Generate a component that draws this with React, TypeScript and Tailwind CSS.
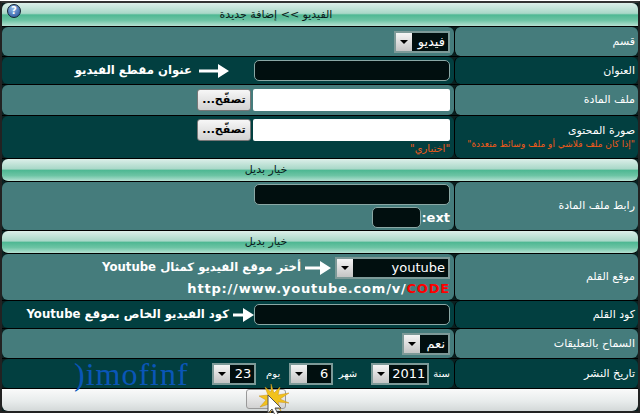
const band = "bg-[linear-gradient(#dcefe9_0%,#a9d8c8_45%,#4fb893_52%,#6cc4a4_75%,#b5e0d2_100%)]";
const rowLight = "bg-[#457c7c]";
const rowDark = "bg-[#023f40]";

const Band = ({ text, h, shift, rounded }: { text: string; h: string; shift: string; rounded?: boolean }) => (
  <div className={`${band} ${h} ${rounded ? "rounded-t-md" : "rounded-md"} border-b border-black flex items-center justify-center text-[11px] text-[#0a1a1a]`}>
    <span dir="rtl" className={`${shift} whitespace-pre`}>{text}</span>
  </div>
);

const Row = ({ label, dark, h, extra, children }: { label: string; dark?: boolean; h: string; extra?: string; children?: React.ReactNode }) => (
  <div className={`flex ${h} border-b border-black`}>
    <div className={`w-[452px] shrink-0 rounded-md ${dark ? rowDark : rowLight} flex flex-col justify-center items-end pr-[4px] pl-2 gap-[2px]`}>
      {children}
    </div>
    <div className={`flex-1 min-w-0 border-l border-black rounded-md ${dark ? rowDark : rowLight} flex flex-col justify-center items-end pr-[3px]`}>
      <span dir="rtl" className="text-[11px] text-white leading-[14px]">{label}</span>
      {extra && <span dir="rtl" className="text-[9px] text-[#f05a1a] leading-[13px] whitespace-nowrap">{extra}</span>}
    </div>
  </div>
);

const Arrow = ({ w }: { w: number }) => (
  <svg width={w} height="14" viewBox={`0 0 ${w} 14`} className="shrink-0">
    <path d={`M0 5.5h${w - 11}V0L${w} 7l-11 7V8.5H0z`} fill="#fff" />
  </svg>
);

const Dark = ({ w }: { w: string }) => (
  <input className={`${w} h-[21px] bg-[#010f0f] border border-[#8aa8a5] rounded-[5px] outline-none`} />
);

const Select = ({ value, w, dirRtl }: { value: string; w: string; dirRtl?: boolean }) => (
  <div className={`${w} h-[22px] border-2 border-[#7d9a98] bg-[#010f0f] flex items-stretch shrink-0`}>
    <div className="w-[16px] bg-[linear-gradient(#f5f5f5,#c4c4c4)] flex items-center justify-center shrink-0">
      <svg width="8" height="4" viewBox="0 0 8 4"><path d="M0 0h8L4 4z" fill="#000" /></svg>
    </div>
    <div dir={dirRtl ? "rtl" : "ltr"} className={`flex-1 flex items-center px-[3px] text-[13px] text-white ${dirRtl ? "justify-start" : "justify-end"}`}>{value}</div>
  </div>
);

const Browse = () => (
  <div className="flex items-center gap-[2px]">
    <div className="w-[54px] h-[22px] rounded-[3px] border border-[#777] bg-[linear-gradient(#f7f7f7,#d2d2d2)] flex items-center justify-center text-[11px] font-bold text-black">
      <span dir="rtl">تصفّح...</span>
    </div>
    <input className="w-[197px] h-[22px] bg-white rounded-[2px] outline-none" />
  </div>
);

export default function App() {
  return (
    <div className="w-[642px] h-[414px] bg-white overflow-hidden" style={{ fontFamily: '"DejaVu Sans", sans-serif' }}>
      <div className="w-[640px] h-[412px] border-2 border-[#222] border-t-[#333] relative bg-[#0a2020] mt-[1px]">
        <div className="absolute z-10 left-[5px] top-[1px] w-[14px] h-[14px] rounded-full bg-[radial-gradient(circle_at_40%_30%,#8fb8e8,#1d4a94)] border border-[#123] flex items-center justify-center text-[10px] font-bold text-white leading-none">?</div>
        <Band text="الفيديو >> إضافة جديدة" h="h-[24px]" shift="mr-[88px] mt-[2px]" rounded />
        <Row label="قسم" h="h-[30px]">
          <Select value="فيديو" w="w-[56px]" dirRtl />
        </Row>
        <Row label="العنوان" dark h="h-[28px]">
          <div className="flex items-center">
            <span dir="rtl" className="text-[11.7px] font-bold text-white">عنوان مقطع الفيديو</span>
            <div className="w-[7px]" />
            <Arrow w={30} />
            <div className="w-[25px]" />
            <Dark w="w-[196px]" />
          </div>
        </Row>
        <Row label="ملف المادة" h="h-[31px]">
          <Browse />
        </Row>
        <Row label="صورة المحتوى" dark h="h-[43px]" extra={'"إذا كان ملف فلاشي أو ملف وسائط متعددة"'}>
          <Browse />
          <span dir="rtl" className="text-[10px] text-[#f05a1a] leading-[12px] whitespace-nowrap">"اختياري"</span>
        </Row>
        <Band text="خيار بديل" h="h-[23px]" shift="mr-[108px]" />
        <Row label="رابط ملف المادة" h="h-[49px]">
          <Dark w="w-[196px]" />
          <div className="flex items-center">
            <Dark w="w-[49px]" />
            <span className="text-[13px] font-bold text-white leading-none">:ext</span>
          </div>
        </Row>
        <Band text="خيار بديل" h="h-[23px]" shift="mr-[108px]" />
        <Row label="موقع القلم" h="h-[47px]">
          <div className="flex items-center">
            <span dir="rtl" className="text-[11.7px] font-bold text-white">أختر موقع الفيديو كمثال Youtube</span>
            <div className="w-[4px]" />
            <Arrow w={26} />
            <div className="w-[4px]" />
            <Select value="youtube" w="w-[115px]" />
          </div>
          <div className="text-[13px] font-bold text-white tracking-[0.8px] leading-[16px]">
            http://www.youtube.com/v/<span className="text-[#ff0000]">CODE</span>
          </div>
        </Row>
        <Row label="كود القلم" dark h="h-[28px]">
          <div className="flex items-center">
            <span dir="rtl" className="text-[11.7px] font-bold text-white">كود الفيديو الخاص بموقع Youtube</span>
            <div className="w-[4px]" />
            <Arrow w={21} />
            <Dark w="w-[196px]" />
          </div>
        </Row>
        <Row label="السماح بالتعليقات" h="h-[30px]">
          <Select value="نعم" w="w-[48px]" dirRtl />
        </Row>
        <Row label="تاريخ النشر" dark h="h-[30px]">
          <div className="flex items-center h-full w-full">
            <div className="ml-[64px] text-[#0a56b8] text-[32px] leading-none tracking-[1px] h-full flex items-center" style={{ fontFamily: '"Liberation Serif", serif' }}>
              <span>)imofinf</span>
            </div>
            <div className="flex-1" />
            <div className="flex items-center gap-[4px]">
              <Select value="23" w="w-[44px]" />
              <span dir="rtl" className="text-[10px] text-white mr-[5px] w-[20px]">يوم</span>
              <Select value="6" w="w-[44px]" />
              <span dir="rtl" className="text-[10px] text-white mr-[10px] w-[20px]">شهر</span>
              <Select value="2011" w="w-[58px]" />
              <span dir="rtl" className="text-[10px] text-white">سنة</span>
            </div>
          </div>
        </Row>
        <div className="h-[22px] rounded-b-md bg-[linear-gradient(#fafafa,#e8ecec_55%,#d3d8d8)] flex justify-center">
          <div className="ml-[-108px] w-[40px] h-[20px] rounded-[3px] border border-[#999] bg-[linear-gradient(#f7f7f7,#d2d2d2)]" />
        </div>
        <svg width="34" height="34" viewBox="0 0 34 34" className="absolute left-[255px] top-[380px]">
          <path d="M14 1l3 9 6-6-2 8 11-2-9 6 9 4-11-1 3 9-7-7-4 9-1-9-9 3 6-7-7-4 9-1-3-8 6 5z" fill="#f2c21c" stroke="#c8901a" strokeWidth="0.5" />
          <path d="M11 12v18l4-4 3 6 3-1-3-6h6z" fill="#fff" stroke="#555" strokeWidth="1" />
        </svg>
      </div>
    </div>
  );
}
